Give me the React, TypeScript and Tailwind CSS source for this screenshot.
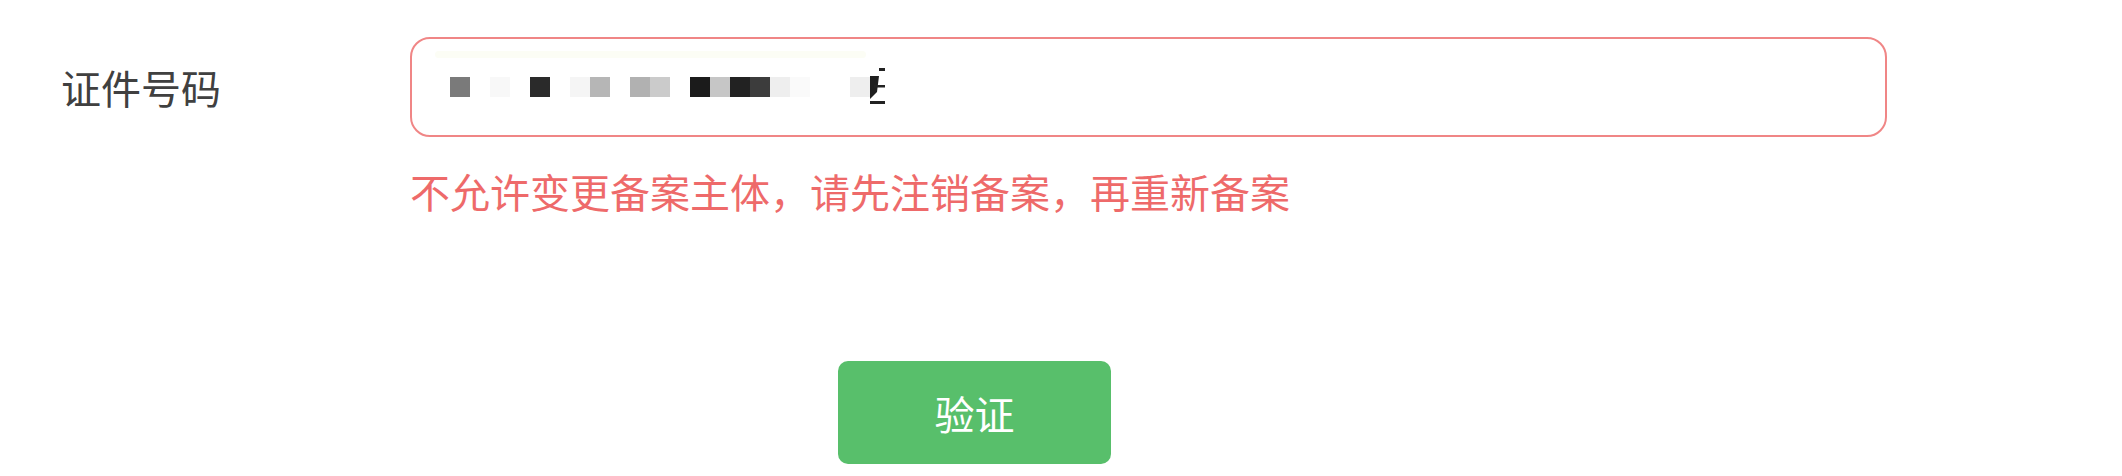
import React from "react";

const cells: string[] = [
  "bg-[#7a7a7a]",
  "",
  "bg-[#f8f8f8]",
  "",
  "bg-[#2a2a2a]",
  "",
  "bg-[#f5f5f5]",
  "bg-[#b6b6b6]",
  "",
  "bg-[#b1b1b1]",
  "bg-[#cbcbcb]",
  "",
  "bg-[#1b1b1b]",
  "bg-[#c6c6c6]",
  "bg-[#222222]",
  "bg-[#3c3c3c]",
  "bg-[#eeeeee]",
  "bg-[#fafafa]",
  "",
  "",
  "bg-[#eeeeee]",
];

export default function App() {
  return (
    <div
      className="w-full h-[476px] bg-white flex"
      style={{ fontFamily: '"Noto Sans CJK SC", "Noto Sans", sans-serif' }}
    >
      <div className="w-[410px] shrink-0 pt-[37px] pl-[61px]">
        <div className="h-[100px] flex items-center text-[40px] leading-[40px] text-[#404040]">
          证件号码
        </div>
      </div>
      <div className="flex flex-col pt-[37px]">
        <div className="relative w-[1477px] h-[100px] border-2 border-[#f08686] rounded-[20px] bg-white flex items-center pl-[38px]">
          <div className="absolute left-[23px] top-[12px] w-[431px] h-[7px] rounded-full bg-[#fcfdf5]" />
          <div className="flex items-center">
            {cells.map((c, i) => (
              <div key={i} className={`w-[20px] h-[20px] ${c}`} />
            ))}
            <svg width="16" height="38" viewBox="0 0 16 38" className="-my-[9px]">
              <rect x="9" y="0" width="6" height="3" fill="#222" />
              <polygon points="0,8 9,8 7,24 0,31" fill="#1e1e1e" />
              <rect x="4" y="17" width="11" height="2.5" fill="#222" />
              <rect x="0" y="33" width="15" height="3" fill="#222" />
            </svg>
          </div>
        </div>
        <div className="mt-[34px] text-[40px] leading-[40px] text-[#ee6a6a]">
          不允许变更备案主体，请先注销备案，再重新备案
        </div>
        <button className="mt-[150px] ml-[428px] w-[273px] h-[103px] rounded-[10px] bg-[#58bf6b] text-white text-[40px] leading-[40px] flex items-center justify-center">
          验证
        </button>
      </div>
    </div>
  );
}
